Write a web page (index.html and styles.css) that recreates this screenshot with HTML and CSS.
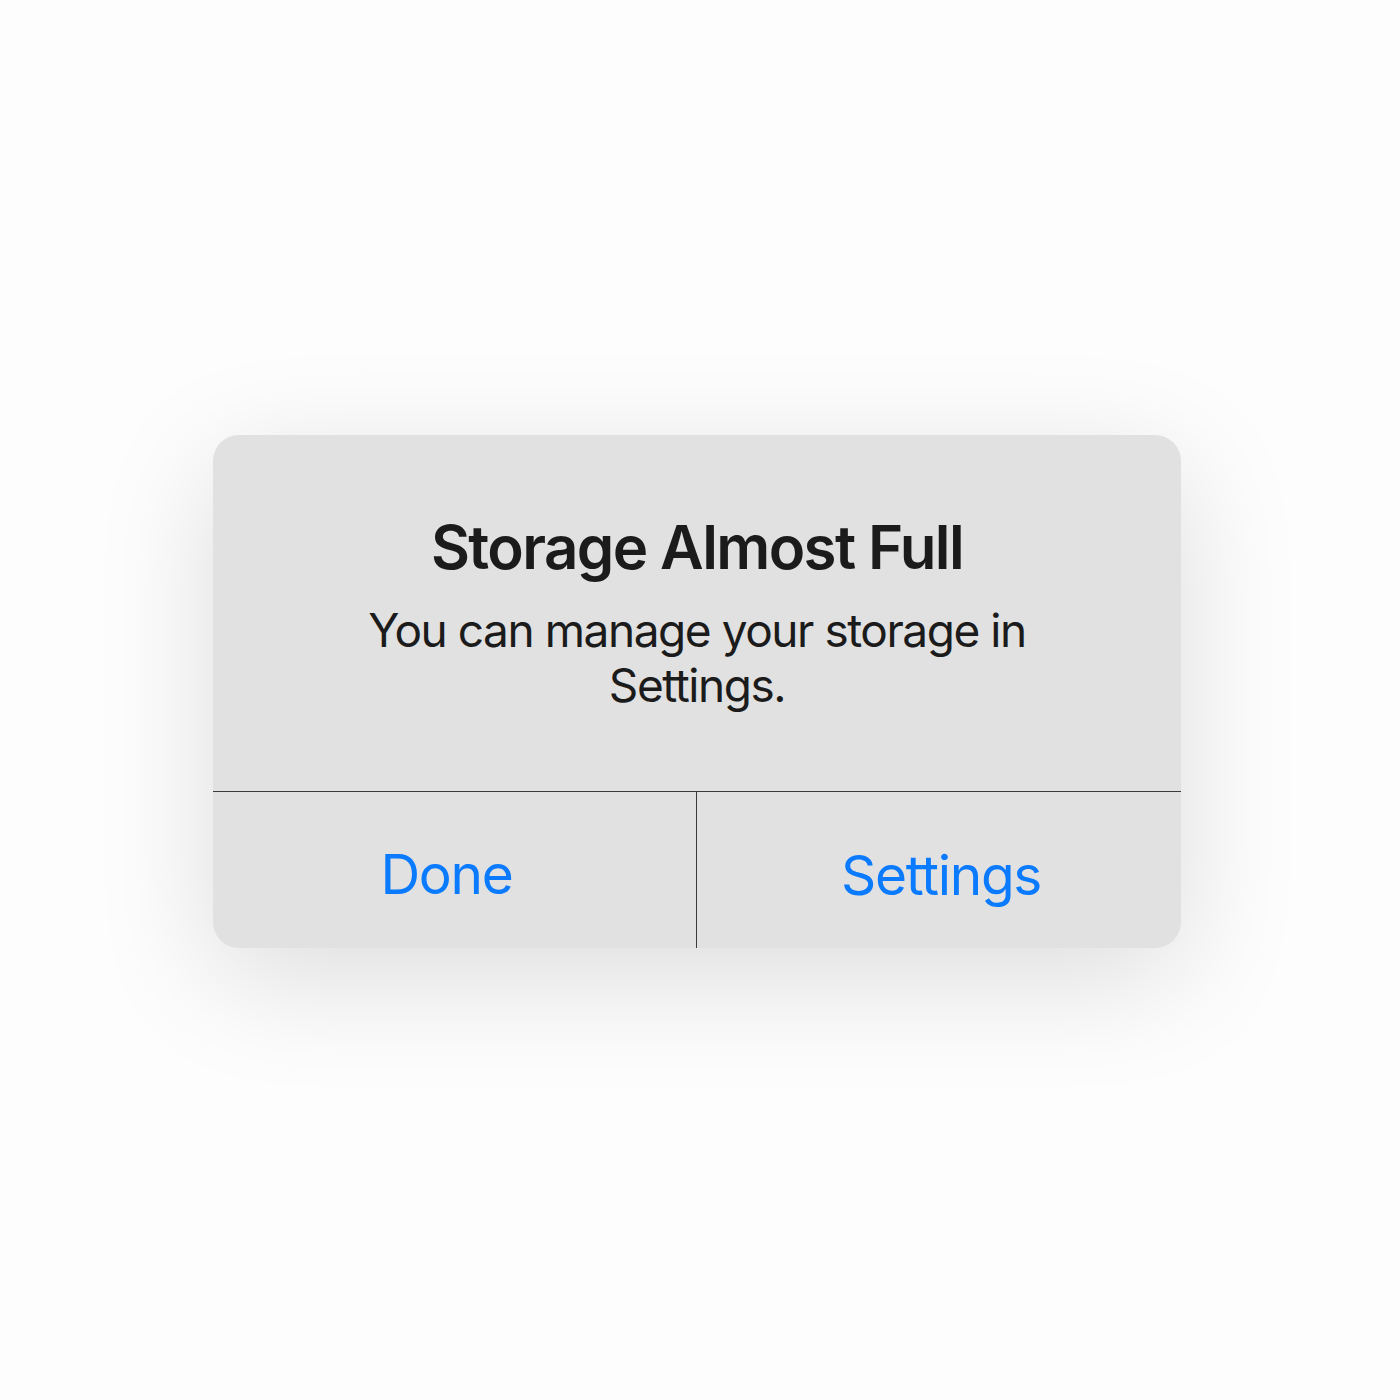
FILE: index.html
```html
<!DOCTYPE html>
<html>
<head>
<meta charset="utf-8">
<link rel="stylesheet" href="styles.css">
</head>
<body>
<div class="stage">
  <div class="alert">
    <div class="content">
      <h1 class="title">Storage Almost Full</h1>
      <p class="message">You can manage your storage in<br>Settings.</p>
    </div>
    <div class="actions">
      <div class="btn btn-done">Done</div>
      <div class="btn btn-settings">Settings</div>
    </div>
  </div>
</div>
</body>
</html>
```
FILE: styles.css
```css
html, body {
  margin: 0;
  padding: 0;
  background: #fdfdfd;
}
.stage {
  width: 1400px;
  height: 1400px;
  display: flex;
  justify-content: center;
  padding-top: 435px;
  box-sizing: border-box;
  padding-right: 6px;
}
.alert {
  width: 968px;
  height: 513px;
  background: #e1e1e1;
  border-radius: 26px;
  box-shadow: 0 30px 120px rgba(0, 0, 0, 0.13);
  display: flex;
  flex-direction: column;
  overflow: hidden;
  font-family: Inter, "Noto Sans", sans-serif;
}
.content {
  height: 357px;
  box-sizing: border-box;
  padding-top: 79px;
  text-align: center;
  border-bottom: 1px solid #3a3a3a;
}
.title {
  margin: 0;
  font-size: 60px;
  font-weight: 600;
  line-height: 66px;
  color: #1b1b1b;
  letter-spacing: -1.6px;
}
.message {
  margin: 23px 0 0;
  font-size: 46px;
  font-weight: 400;
  line-height: 55px;
  color: #1b1b1b;
  letter-spacing: -1.45px;
}
.actions {
  flex: 1;
  display: flex;
}
.btn {
  flex: 0 0 50%;
  box-sizing: border-box;
  display: flex;
  align-items: center;
  justify-content: center;
  font-size: 55px;
  font-weight: 400;
  color: #0a7aff;
  letter-spacing: -1.3px;
}
.btn-done {
  border-right: 1px solid #3a3a3a;
  padding-right: 16px;
  padding-top: 8px;
}
.btn-settings {
  padding-top: 10px;
  padding-left: 4px;
}
```
